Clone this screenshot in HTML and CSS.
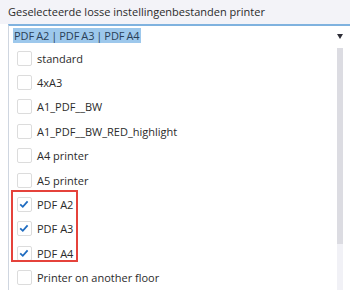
FILE: index.html
```html
<!DOCTYPE html>
<html lang="nl">
<head>
  <meta charset="UTF-8">
  <title>Printer instellingen</title>
  <link rel="stylesheet" href="styles.css">
</head>
<body>
  <div class="header">Geselecteerde losse instellingenbestanden printer</div>

  <div class="select">
    <div class="value-row">
      <span class="value">PDF A2 | PDF A3 | PDF A4</span>
      <span class="arrow"></span>
    </div>
    <div class="dropdown">
      <div class="options">
        <div class="option"><span class="box"></span>standard</div>
        <div class="option"><span class="box"></span>4xA3</div>
        <div class="option"><span class="box"></span>A1_PDF__BW</div>
        <div class="option"><span class="box"></span>A1_PDF__BW_RED_highlight</div>
        <div class="option"><span class="box"></span>A4 printer</div>
        <div class="option"><span class="box"></span>A5 printer</div>
        <div class="marked">
          <div class="option"><span class="box"><svg viewBox="0 0 14 14" width="14" height="14"><path d="M3.2 7.4 L5.8 9.8 L10.6 4.4" fill="none" stroke="#1f6cc0" stroke-width="1.8"/></svg></span>PDF A2</div>
          <div class="option"><span class="box"><svg viewBox="0 0 14 14" width="14" height="14"><path d="M3.2 7.4 L5.8 9.8 L10.6 4.4" fill="none" stroke="#1f6cc0" stroke-width="1.8"/></svg></span>PDF A3</div>
          <div class="option"><span class="box"><svg viewBox="0 0 14 14" width="14" height="14"><path d="M3.2 7.4 L5.8 9.8 L10.6 4.4" fill="none" stroke="#1f6cc0" stroke-width="1.8"/></svg></span>PDF A4</div>
        </div>
        <div class="option"><span class="box"></span>Printer on another floor</div>
      </div>
      <div class="scrollbar">
        <div class="thumb"></div>
      </div>
    </div>
  </div>
</body>
</html>
```

FILE: styles.css
```css
body {
  margin: 0;
  background-color: white;
  font-family: 'Open Sans', 'Noto Sans', sans-serif;
  font-size: 11px;
  color: #2b2b2b;
  height: 290px;
  overflow: hidden;
}
.header {
  background-color: #f3f3f8;
  height: 24px;
  line-height: 24px;
  padding-left: 8px;
}
.select {
  margin-left: 8px;
  border-top: 2px solid #7fb2df;
  border-left: 1px solid #cfd6e0;
  height: 264px;
}
.value-row {
  display: flex;
  align-items: center;
  justify-content: space-between;
  height: 20px;
  padding-left: 4px;
  padding-right: 7px;
}
.value {
  background-color: #9dc8ec;
  color: #2a3f57;
  line-height: 15px;
  padding: 0 1px;
  margin-top: -2px;
  word-spacing: -1px;
}
.arrow {
  width: 0;
  height: 0;
  border-left: 3.5px solid transparent;
  border-right: 3.5px solid transparent;
  border-top: 5px solid #2e2e38;
}
.dropdown {
  display: flex;
}
.options {
  flex: 1;
}
.option {
  display: flex;
  align-items: center;
  height: 24.4px;
  padding-left: 8px;
  gap: 5px;
}
.box {
  width: 13px;
  height: 13px;
  border: 1px solid #dcdcdc;
  border-radius: 2px;
  background-color: white;
  display: flex;
}
.box svg {
  margin: -1px;
}
.marked {
  position: relative;
}
.marked::after {
  content: '';
  position: absolute;
  left: 2px;
  top: -2px;
  width: 67px;
  height: 72px;
  border: 2px solid #e5423b;
  box-sizing: border-box;
}
.scrollbar {
  width: 6px;
  margin-right: 7px;
  margin-top: 2px;
  height: 242px;
  background-color: #f1f1f6;
}
.thumb {
  height: 196px;
  background-color: #dcdce2;
}
```
